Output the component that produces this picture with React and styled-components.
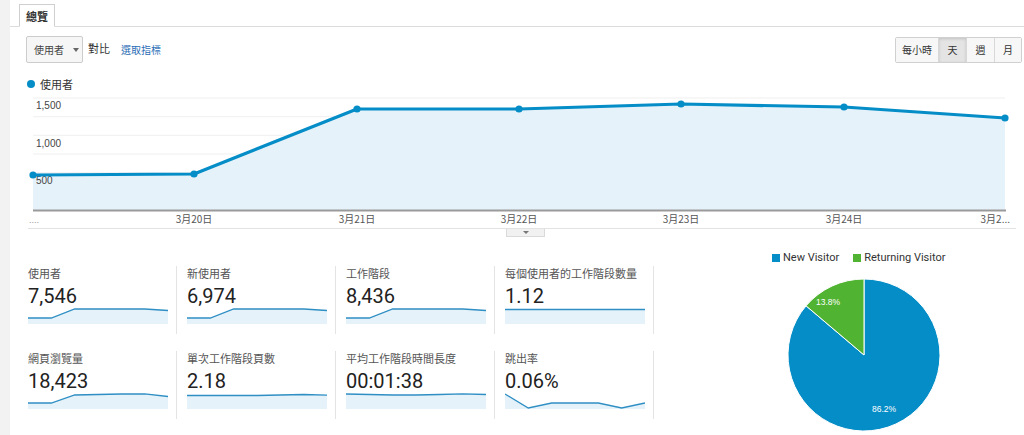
import React from 'react';
import styled, { createGlobalStyle } from 'styled-components';

const Global = createGlobalStyle`
  html, body { margin: 0; padding: 0; background: #f2f2f2; }
  body { font-family: Roboto, "Noto Sans CJK TC", sans-serif; color: #333; }
`;

const BLUE = '#058dc7';
const GREEN = '#50b432';
const FILL = '#e6f2f9';
const CJK = `"Noto Sans CJK TC", "Noto Sans CJK SC", sans-serif`;

const Page = styled.div`
  display: flex;
  width: 1024px;
  height: 435px;
  overflow: hidden;
`;
const Rail = styled.div`
  width: 10px;
  flex: none;
  background: #f2f2f2;
`;
const Main = styled.div`
  flex: 1;
  min-width: 0;
  background: #fff;
  display: flex;
  flex-direction: column;
`;
const TabBar = styled.div`
  height: 26px;
  border-bottom: 1px solid #dcdcdc;
  display: flex;
  align-items: flex-end;
  padding-left: 9px;
`;
const Tab = styled.div`
  height: 23px;
  box-sizing: border-box;
  padding: 0 6px;
  margin-bottom: -1px;
  border: 1px solid #cfcfcf;
  border-bottom: 1px solid #fff;
  background: #fff;
  font: 600 11px/22px ${CJK};
  color: #333;
`;
const Toolbar = styled.div`
  display: flex;
  align-items: center;
  padding: 9px 2px 0 16px;
`;
const Dropdown = styled.div`
  height: 27px;
  box-sizing: border-box;
  width: 57px;
  display: flex;
  align-items: center;
  gap: 9px;
  padding-left: 7px;
  border: 1px solid #cccccc;
  border-radius: 2px;
  background: #f6f6f6;
  font: 10px ${CJK};
  color: #444;
`;
const Caret = styled.span`
  width: 0;
  height: 0;
  border-left: 3px solid transparent;
  border-right: 3px solid transparent;
  border-top: 4px solid #666;
`;
const Plain = styled.span`
  margin-left: 5px;
  margin-top: -4px;
  font: 11px ${CJK};
  color: #333;
`;
const LinkText = styled.span`
  margin-left: 11px;
  font: 10px ${CJK};
  color: #2a6db5;
`;
const ToggleGroup = styled.div`
  margin-left: auto;
  display: flex;
  border: 1px solid #d0d0d0;
  border-radius: 2px;
  height: 26px;
  box-sizing: border-box;
`;
const ToggleBtn = styled.div`
  width: ${p => p.$w}px;
  display: flex;
  align-items: center;
  justify-content: center;
  font: 10px ${CJK};
  color: #333;
  background: ${p => (p.$active ? '#e4e4e4' : '#f7f7f7')};
  box-shadow: ${p => (p.$active ? 'inset 0 1px 3px rgba(0,0,0,0.15)' : 'none')};
  & + & { border-left: 1px solid #d8d8d8; }
`;
const LegendRow = styled.div`
  display: flex;
  align-items: center;
  gap: 5px;
  margin: 13px 0 0 17px;
  height: 16px;
  font: 11px ${CJK};
  color: #333;
`;
const Dot = styled.span`
  width: 8px;
  height: 8px;
  border-radius: 50%;
  background: ${BLUE};
`;
const ChartSvg = styled.svg`
  display: block;
`;
const HandleRow = styled.div`
  display: flex;
  padding-left: 496px;
`;
const Handle = styled.div`
  width: 39px;
  height: 8px;
  box-sizing: border-box;
  border: 1px solid #dadada;
  border-top: none;
  background: #f1f1f1;
  display: flex;
  align-items: center;
  justify-content: center;
  &::after {
    content: '';
    border-left: 3px solid transparent;
    border-right: 3px solid transparent;
    border-top: 3px solid #777;
  }
`;
const Bottom = styled.div`
  display: flex;
`;
const MetricsGrid = styled.div`
  display: grid;
  grid-template-columns: repeat(4, 159px);
  row-gap: 17px;
  margin: 29px 0 0 8px;
  align-content: start;
`;
const Cell = styled.div`
  height: 68px;
  box-sizing: border-box;
  padding: 0 8px 0 10px;
  border-right: 1px solid #e4e4e4;
  display: flex;
  flex-direction: column;
`;
const MetricLabel = styled.div`
  font: 11px/14px ${CJK};
  color: #555;
  white-space: nowrap;
`;
const MetricValue = styled.div`
  margin-top: 4px;
  font: 20px/24px Roboto, sans-serif;
  color: #222;
`;
const Spark = styled.svg`
  display: block;
  margin-top: -2px;
`;
const PiePanel = styled.div`
  flex: 1;
  display: flex;
  flex-direction: column;
  padding-left: 118px;
  padding-top: 14px;
`;
const PieLegend = styled.div`
  display: flex;
  align-items: center;
  height: 14px;
  font: 11px/14px Roboto, sans-serif;
  color: #333;
`;
const LegendItem = styled.div`
  display: flex;
  align-items: center;
  gap: 3px;
  & + & { margin-left: 14px; }
`;
const Swatch = styled.span`
  width: 8px;
  height: 8px;
  background: ${p => p.$c};
`;
const PieSvg = styled.svg`
  display: block;
  margin: 11px 0 0 13px;
`;

const chartPts = [
  [23, 83], [184, 82], [347, 17], [509, 17], [671, 12], [834, 15], [995, 26],
];
const gridY = [6, 24.7, 43.3, 62, 80.7, 99.3];
const yLabels = [['1,500', 17], ['1,000', 55], ['500', 92]];
const xLabels = [['3月20日', 184], ['3月21日', 347], ['3月22日', 509], ['3月23日', 671], ['3月24日', 834]];

function MainChart() {
  const line = chartPts.map((p, i) => `${i ? 'L' : 'M'}${p[0]},${p[1]}`).join(' ');
  const area = `${line} L995,118 L23,118 Z`;
  return (
    <ChartSvg width="1014" height="137" viewBox="0 0 1014 137">
      {gridY.map(y => (
        <line key={y} x1="23" x2="995" y1={y} y2={y} stroke="#efefef" strokeWidth="1" />
      ))}
      <path d={area} fill={FILL} />
      <line x1="23" x2="996" y1="118.5" y2="118.5" stroke="#9a9a9a" strokeWidth="2" />
      {yLabels.map(([t, y]) => (
        <text key={t} x="26" y={y} fontFamily="Liberation Sans, Arial, sans-serif" fontSize="10" fill="#444">{t}</text>
      ))}
      <path d={line} fill="none" stroke={BLUE} strokeWidth="3.2" strokeLinejoin="round" />
      {chartPts.map(p => (
        <circle key={p[0]} cx={p[0]} cy={p[1]} r="3.6" fill={BLUE} />
      ))}
      {xLabels.map(([t, x]) => (
        <text key={t} x={x} y="131" textAnchor="middle" fontFamily='"Noto Sans CJK TC", sans-serif' fontSize="10" fill="#555">{t}</text>
      ))}
      <text x="1000" y="131" textAnchor="end" fontFamily='"Noto Sans CJK TC", sans-serif' fontSize="10" fill="#555">3月2...</text>
      <text x="19" y="131" fontFamily="Liberation Sans, sans-serif" fontSize="9" fill="#999">....</text>
      <line x1="18" x2="1006" y1="136.5" y2="136.5" stroke="#e2e2e2" strokeWidth="1" />
    </ChartSvg>
  );
}

function Sparkline({ values }) {
  const w = 140;
  const h = 18;
  const step = w / (values.length - 1);
  const pts = values.map((v, i) => [i * step, v]);
  const line = pts.map((p, i) => `${i ? 'L' : 'M'}${p[0].toFixed(1)},${p[1]}`).join(' ');
  return (
    <Spark width={w} height={h} viewBox={`0 0 ${w} ${h}`}>
      <path d={`${line} L${w},${h} L0,${h} Z`} fill={FILL} />
      <path d={line} fill="none" stroke="#2f8fc4" strokeWidth="1.3" />
    </Spark>
  );
}

const metrics = [
  { label: '使用者', value: '7,546', spark: [12, 12, 3, 3, 3, 3, 4.5] },
  { label: '新使用者', value: '6,974', spark: [12, 12, 3, 3, 3, 3, 4.5] },
  { label: '工作階段', value: '8,436', spark: [12, 12, 3, 3, 3, 3, 4.5] },
  { label: '每個使用者的工作階段數量', value: '1.12', spark: [3.5, 3.5, 3.5, 3.5, 3.5, 3.5, 3.5] },
  { label: '網頁瀏覽量', value: '18,423', spark: [12, 12, 4, 3.5, 3, 2.8, 5.5] },
  { label: '單次工作階段頁數', value: '2.18', spark: [4.5, 4.5, 4.5, 4.5, 4, 3.5, 4.2] },
  { label: '平均工作階段時間長度', value: '00:01:38', spark: [3, 3.5, 4, 4, 3.5, 2.8, 3.5] },
  { label: '跳出率', value: '0.06%', spark: [3, 17, 12, 12, 12, 17, 12] },
];

function Pie() {
  const cx = 79, cy = 79, r = 76;
  const frac = 0.138;
  const a = frac * 2 * Math.PI;
  const ex = cx - r * Math.sin(a);
  const ey = cy - r * Math.cos(a);
  const green = `M${cx},${cy} L${cx},${cy - r} A${r},${r} 0 0 0 ${ex.toFixed(2)},${ey.toFixed(2)} Z`;
  const blue = `M${cx},${cy} L${ex.toFixed(2)},${ey.toFixed(2)} A${r},${r} 0 1 0 ${cx},${cy - r} Z`;
  return (
    <PieSvg width="158" height="158" viewBox="0 0 158 158">
      <path d={blue} fill={BLUE} stroke="#fff" strokeWidth="1" />
      <path d={green} fill={GREEN} stroke="#fff" strokeWidth="1" />
      <text x={cx - 36} y={cy - 50} textAnchor="middle" fontFamily="Liberation Sans, Arial, sans-serif" fontSize="8.5" fill="#fff">13.8%</text>
      <text x={cx + 20} y={cy + 57} textAnchor="middle" fontFamily="Liberation Sans, Arial, sans-serif" fontSize="8.5" fill="#fff">86.2%</text>
    </PieSvg>
  );
}

export default function App() {
  return (
    <>
      <Global />
      <Page>
        <Rail />
        <Main>
          <TabBar>
            <Tab>總覽</Tab>
          </TabBar>
          <Toolbar>
            <Dropdown>
              使用者<Caret />
            </Dropdown>
            <Plain>對比</Plain>
            <LinkText>選取指標</LinkText>
            <ToggleGroup>
              <ToggleBtn $w={42}>每小時</ToggleBtn>
              <ToggleBtn $w={27} $active>天</ToggleBtn>
              <ToggleBtn $w={27}>週</ToggleBtn>
              <ToggleBtn $w={26}>月</ToggleBtn>
            </ToggleGroup>
          </Toolbar>
          <LegendRow>
            <Dot />
            使用者
          </LegendRow>
          <MainChart />
          <HandleRow>
            <Handle />
          </HandleRow>
          <Bottom>
            <MetricsGrid>
              {metrics.map(m => (
                <Cell key={m.label}>
                  <MetricLabel>{m.label}</MetricLabel>
                  <MetricValue>{m.value}</MetricValue>
                  <Sparkline values={m.spark} />
                </Cell>
              ))}
            </MetricsGrid>
            <PiePanel>
              <PieLegend>
                <LegendItem><Swatch $c={BLUE} />New Visitor</LegendItem>
                <LegendItem><Swatch $c={GREEN} />Returning Visitor</LegendItem>
              </PieLegend>
              <Pie />
            </PiePanel>
          </Bottom>
        </Main>
      </Page>
    </>
  );
}
